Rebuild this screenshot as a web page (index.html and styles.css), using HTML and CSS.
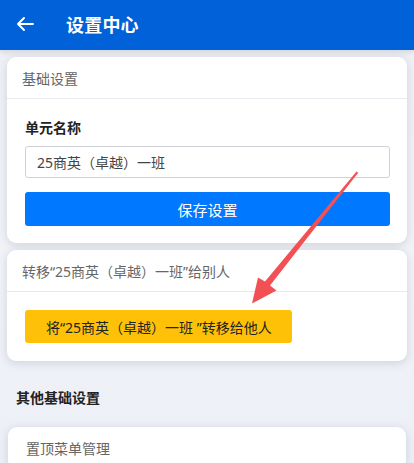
FILE: index.html
```html
<!DOCTYPE html>
<html lang="zh">
<head>
<meta charset="utf-8">
<title>设置中心</title>
<link rel="stylesheet" href="styles.css">
</head>
<body>
<header class="topbar">
  <svg class="back" width="18" height="16" viewBox="0 0 18 16"><path d="M2 8H17M8 2L2 8L8 14" fill="none" stroke="#fff" stroke-width="2" stroke-linecap="round" stroke-linejoin="round"/></svg>
  <h1 class="title">设置中心</h1>
</header>
<main class="content">
  <section class="card card-a">
    <div class="card-head">基础设置</div>
    <div class="card-body">
      <div class="label">单元名称</div>
      <div class="input">25商英（卓越）一班</div>
      <div class="btn-primary">保存设置</div>
    </div>
  </section>
  <section class="card card-b">
    <div class="card-head">转移“25商英（卓越）一班”给别人</div>
    <div class="card-body card-body-b">
      <div class="btn-warn">将“25商英（卓越）一班 ”转移给他人</div>
    </div>
  </section>
  <h2 class="section-title">其他基础设置</h2>
  <section class="card card-c">
    <div class="card-head card-head-c">置顶菜单管理</div>
  </section>
</main>
<svg class="annot" width="414" height="463" viewBox="0 0 414 463"><polygon points="356.5,171.5 358.2,172.8 270,285.5 276.5,290.5 252,303.5 258,277.5 265,281.5" fill="#f25054"/></svg>
</body>
</html>
```
FILE: styles.css
```css
* { box-sizing: border-box; margin: 0; padding: 0; }
html, body { height: 100%; overflow: hidden; }
body {
  font-family: "Noto Sans", "Noto Sans CJK SC", sans-serif;
  background: linear-gradient(180deg, #eef0f5 0%, #f1f3f8 60%, #eceff6 100%);
  color: #333;
  position: relative;
}
.topbar {
  height: 50px;
  background: #0061d9;
  display: flex;
  align-items: center;
  padding-left: 16px;
  box-shadow: 0 2px 6px rgba(0,0,0,0.12);
}
.back { display: block; margin-right: 32px; margin-top: -2px; }
.title {
  color: #fff;
  font-size: 18px;
  font-weight: 700;
  letter-spacing: 0.2px;
  margin-top: -2px;
}
.content { padding: 7px 7px 0; }
.card {
  background: #fff;
  border-radius: 9px;
  box-shadow: 0 2px 10px rgba(40,50,80,0.16);
}
.card + .card { margin-top: 7px; }
.card-head {
  height: 42px;
  border-bottom: 1px solid #e8e9ee;
  display: flex;
  align-items: center;
  padding-left: 15px;
  font-size: 14px;
  color: #666;
}
.card-body { padding: 19px 17px 17px 18px; }
.label { font-size: 14px; font-weight: 700; color: #222; line-height: 20px; }
.input {
  margin-top: 8px;
  height: 32px;
  border: 1px solid #cfd1d6;
  border-radius: 3px;
  padding-left: 11px;
  display: flex;
  align-items: center;
  font-size: 14px;
  color: #444;
}
.btn-primary {
  margin-top: 14px;
  height: 34px;
  background: #0078ff;
  border-radius: 3px;
  color: #fff;
  font-size: 15px;
  display: flex;
  align-items: center;
  justify-content: center;
}
.card-body-b { padding: 18px 18px 18px 18px; }
.btn-warn {
  display: inline-flex;
  align-items: center;
  height: 33px;
  width: 267px;
  padding-left: 21px;
  background: #ffc107;
  border-radius: 3px;
  color: #222;
  font-size: 14px;
}
.section-title {
  font-size: 14px;
  font-weight: 700;
  color: #222;
  margin: 27px 0 0 9px;
  line-height: 20px;
}
.card-c { margin: 19px 1px 0; }
.card-head-c { border-bottom: none; padding-left: 18px; }
.annot { position: absolute; left: 0; top: 0; pointer-events: none; }
```
